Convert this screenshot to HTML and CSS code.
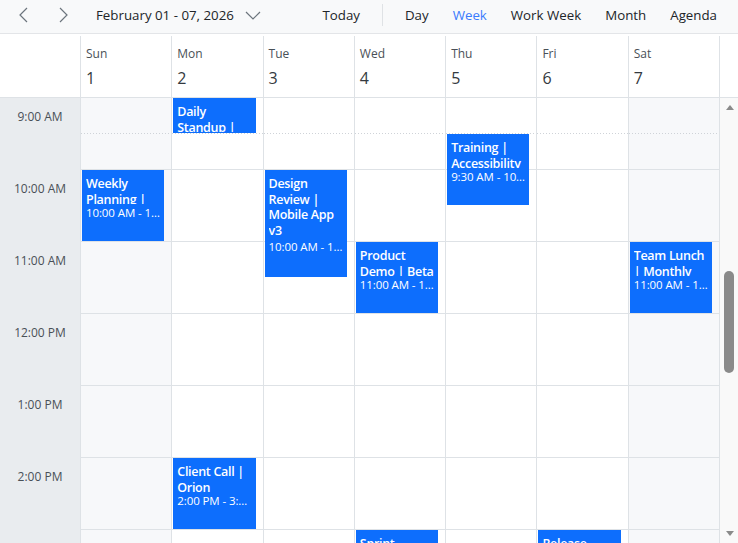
FILE: index.html
```html
<!DOCTYPE html>
<html lang="en">
<head>
    <meta charset="UTF-8">
    <meta name="viewport" content="width=device-width, initial-scale=1.0">
    <title>Scheduler - Week</title>
    <link rel="stylesheet" href="styles.css">
</head>
<body>
    <div class="scheduler">
        <div class="toolbar">
            <div class="nav">
                <button class="nav-btn" aria-label="Previous">
                    <svg width="9" height="16" viewBox="0 0 9 16"><path d="M8 1L1 8l7 7" fill="none" stroke="#6c757d" stroke-width="1.2"/></svg>
                </button>
                <button class="nav-btn" aria-label="Next">
                    <svg width="9" height="16" viewBox="0 0 9 16"><path d="M1 1l7 7-7 7" fill="none" stroke="#6c757d" stroke-width="1.2"/></svg>
                </button>
                <button class="range-btn">
                    <span>February 01 - 07, 2026</span>
                    <svg width="16" height="9" viewBox="0 0 16 9"><path d="M1 1l7 7 7-7" fill="none" stroke="#6c757d" stroke-width="1.2"/></svg>
                </button>
            </div>
            <div class="views">
                <button class="view-btn">Today</button>
                <span class="separator"></span>
                <button class="view-btn">Day</button>
                <button class="view-btn active">Week</button>
                <button class="view-btn">Work Week</button>
                <button class="view-btn">Month</button>
                <button class="view-btn">Agenda</button>
            </div>
        </div>

        <div class="header">
            <div class="gutter-head"></div>
            <div class="day-head"><span class="day-name">Sun</span><span class="day-num">1</span></div>
            <div class="day-head"><span class="day-name">Mon</span><span class="day-num">2</span></div>
            <div class="day-head"><span class="day-name">Tue</span><span class="day-num">3</span></div>
            <div class="day-head"><span class="day-name">Wed</span><span class="day-num">4</span></div>
            <div class="day-head"><span class="day-name">Thu</span><span class="day-num">5</span></div>
            <div class="day-head"><span class="day-name">Fri</span><span class="day-num">6</span></div>
            <div class="day-head last"><span class="day-name">Sat</span><span class="day-num">7</span></div>
            <div class="scroll-head"></div>
        </div>

        <div class="body">
            <div class="gutter">
                <div class="hour-label">9:00 AM</div>
                <div class="hour-label">10:00 AM</div>
                <div class="hour-label">11:00 AM</div>
                <div class="hour-label">12:00 PM</div>
                <div class="hour-label">1:00 PM</div>
                <div class="hour-label">2:00 PM</div>
                <div class="hour-label">3:00 PM</div>
            </div>
            <div class="days">
                <div class="day weekend">
                    <div class="slots"></div>
                    <div class="event" style="top: 72px; height: 71px;">
                        <div class="event-title">Weekly Planning | Team Sync</div>
                        <div class="event-time">10:00 AM - 11:00 AM</div>
                    </div>
                </div>
                <div class="day">
                    <div class="slots"></div>
                    <div class="event" style="top: 0px; height: 35px;">
                        <div class="event-title">Daily Standup | Team Alpha</div>
                        <div class="event-time">9:00 AM - 9:30 AM</div>
                    </div>
                    <div class="event" style="top: 360px; height: 71px;">
                        <div class="event-title">Client Call | Orion</div>
                        <div class="event-time">2:00 PM - 3:00 PM</div>
                    </div>
                </div>
                <div class="day">
                    <div class="slots"></div>
                    <div class="event" style="top: 72px; height: 107px;">
                        <div class="event-title">Design Review | Mobile App v3</div>
                        <div class="event-time">10:00 AM - 11:30 AM</div>
                    </div>
                </div>
                <div class="day">
                    <div class="slots"></div>
                    <div class="event" style="top: 144px; height: 71px;">
                        <div class="event-title">Product Demo | Beta Release</div>
                        <div class="event-time">11:00 AM - 12:00 PM</div>
                    </div>
                    <div class="event" style="top: 432px; height: 71px;">
                        <div class="event-title">Sprint Retrospective</div>
                        <div class="event-time">3:00 PM - 4:00 PM</div>
                    </div>
                </div>
                <div class="day">
                    <div class="slots"></div>
                    <div class="event" style="top: 36px; height: 71px;">
                        <div class="event-title">Training | Accessibility Basics</div>
                        <div class="event-time">9:30 AM - 10:30 AM</div>
                    </div>
                </div>
                <div class="day">
                    <div class="slots"></div>
                    <div class="event" style="top: 432px; height: 71px;">
                        <div class="event-title">Release Planning</div>
                        <div class="event-time">3:00 PM - 4:00 PM</div>
                    </div>
                </div>
                <div class="day weekend last">
                    <div class="slots"></div>
                    <div class="event" style="top: 144px; height: 71px;">
                        <div class="event-title">Team Lunch | Monthly Social</div>
                        <div class="event-time">11:00 AM - 12:00 PM</div>
                    </div>
                </div>
            </div>
            <div class="scrollbar">
                <span class="arrow up"></span>
                <span class="thumb"></span>
                <span class="arrow down"></span>
            </div>
        </div>
    </div>
</body>
</html>
```

FILE: styles.css
```css
* {
    box-sizing: border-box;
}
body {
    margin: 0;
    font-family: "Open Sans", "Noto Sans", Arial, sans-serif;
    color: #212529;
    background-color: #fff;
}
button {
    font: inherit;
    color: inherit;
    background: none;
    border: none;
    cursor: pointer;
}
.scheduler {
    width: 738px;
    height: 543px;
    display: flex;
    flex-direction: column;
    overflow: hidden;
}

/* barra superior */
.toolbar {
    height: 34px;
    flex-shrink: 0;
    display: flex;
    align-items: center;
    padding: 0 9px 3px 3px;
    background-color: #f8f9fa;
    border-bottom: 1px solid #e3e5e8;
}
.nav {
    display: flex;
    align-items: center;
    height: 100%;
}
.nav-btn {
    width: 40px;
    height: 100%;
    display: flex;
    align-items: center;
    justify-content: center;
    padding: 0;
}
.range-btn {
    display: flex;
    align-items: center;
    gap: 11px;
    padding: 0 13px;
    height: 100%;
    font-size: 13.3px;
}
.views {
    margin-left: auto;
    display: flex;
    align-items: center;
    height: 100%;
}
.view-btn {
    padding: 0 12px;
    height: 100%;
    font-size: 13.3px;
}
.view-btn.active {
    color: #3a7bfd;
}
.separator {
    width: 1px;
    height: 22px;
    margin: 0 10px;
    background-color: #dfe2e5;
}

/* cabeçalho dos dias */
.header {
    height: 64px;
    flex-shrink: 0;
    display: flex;
    padding-top: 2px;
    border-bottom: 1px solid #dee2e6;
}
.gutter-head {
    width: 80px;
    flex-shrink: 0;
}
.day-head {
    flex: 1;
    display: flex;
    flex-direction: column;
    padding: 10px 5px 0;
    border-left: 1px solid #dee2e6;
}
.day-head.last {
    border-right: 1px solid #dee2e6;
}
.day-name {
    font-size: 12px;
    line-height: 16px;
    color: #495057;
}
.day-num {
    font-size: 16px;
    line-height: 22px;
    margin-top: 5px;
    color: #343a40;
}
.scroll-head {
    width: 18px;
    flex-shrink: 0;
}

/* grade de horas */
.body {
    flex: 1;
    display: flex;
    min-height: 0;
}
.gutter {
    width: 80px;
    flex-shrink: 0;
    background-color: #e9ecef;
}
.hour-label {
    height: 72px;
    padding-top: 11px;
    text-align: center;
    font-size: 12px;
    line-height: 16px;
    color: #495057;
}
.days {
    flex: 1;
    display: flex;
}
.day {
    flex: 1;
    position: relative;
    border-left: 1px solid #dee2e6;
}
.day.last {
    border-right: 1px solid #dee2e6;
}
.day.weekend {
    background-color: #f7f8fa;
}
.slots {
    height: 504px;
    background-image:
        linear-gradient(to bottom, transparent 71px, #dee2e6 71px, #dee2e6 72px),
        repeating-linear-gradient(to right, #cfd3d8 0 1px, transparent 1px 3px);
    background-size: 100% 72px, 100% 1px;
    background-repeat: repeat-y, repeat-x;
    background-position: 0 0, 0 35px;
}
.event {
    position: absolute;
    left: 1px;
    right: 7px;
    display: flex;
    flex-direction: column;
    padding: 6px 3px 21px 4px;
    overflow: hidden;
    background-color: #0d6efd;
    color: #fff;
}
.event-title {
    flex: 0 1 auto;
    min-height: 28px;
    overflow: hidden;
    font-size: 12.5px;
    font-weight: 600;
    line-height: 15.5px;
    letter-spacing: -0.3px;
}
.event-time {
    flex-shrink: 0;
    margin-top: 2px;
    font-size: 11.5px;
    line-height: 14px;
    letter-spacing: -0.1px;
    white-space: nowrap;
    overflow: hidden;
    text-overflow: ellipsis;
}

/* barra de rolagem */
.scrollbar {
    width: 18px;
    flex-shrink: 0;
    position: relative;
    background-color: #f9f9f9;
}
.arrow {
    position: absolute;
    left: 6px;
    width: 0;
    height: 0;
    border-left: 4px solid transparent;
    border-right: 4px solid transparent;
}
.arrow.up {
    top: 7px;
    border-bottom: 5px solid #8a8a8a;
}
.arrow.down {
    bottom: 7px;
    border-top: 5px solid #8a8a8a;
}
.thumb {
    position: absolute;
    left: 4px;
    width: 10px;
    top: 173px;
    height: 102px;
    border-radius: 5px;
    background-color: #8a8a8a;
}
```
